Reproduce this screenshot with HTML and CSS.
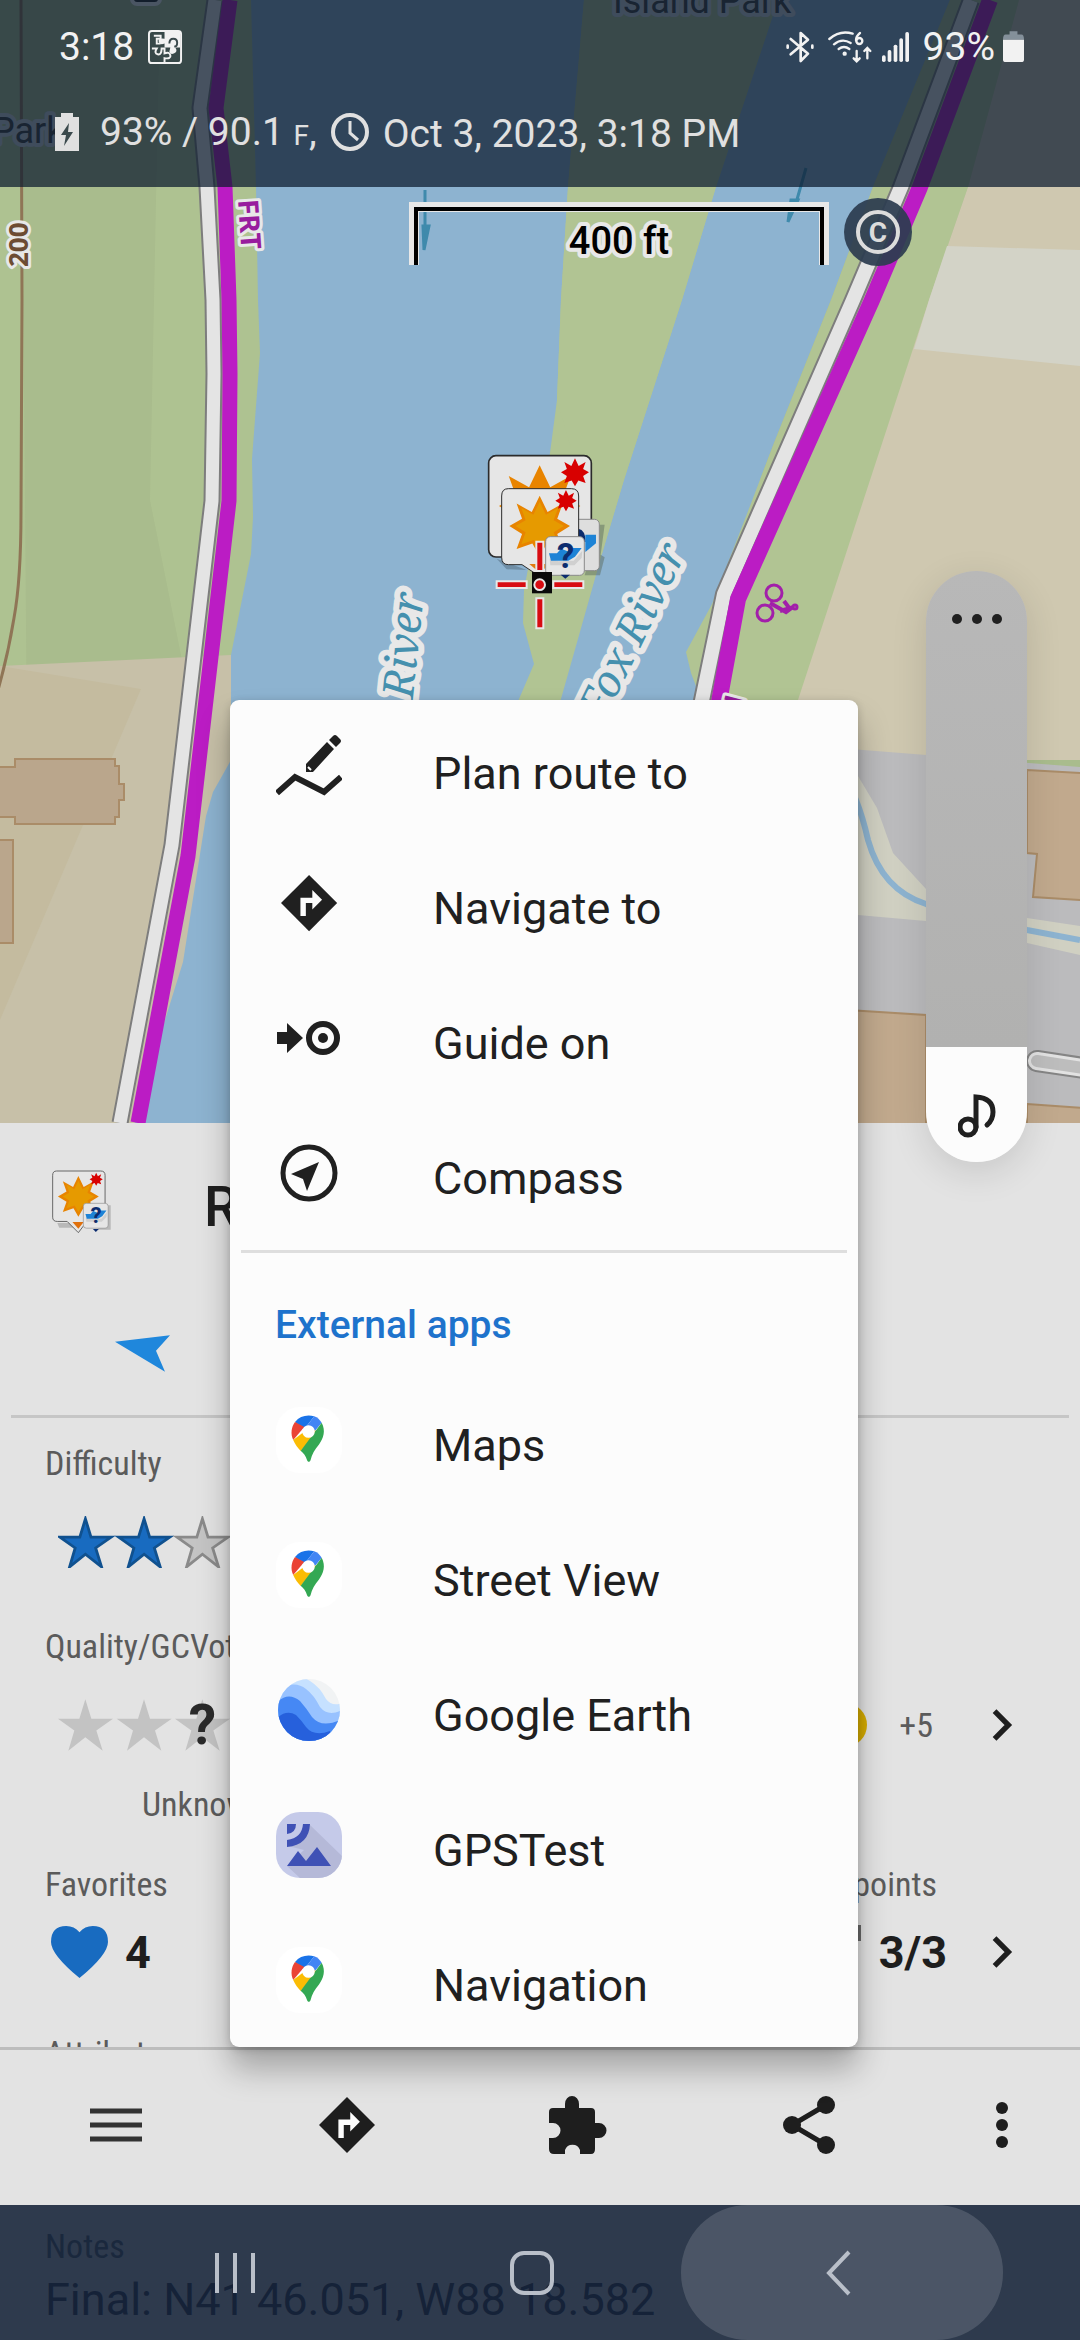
FILE: index.html
```html
<!DOCTYPE html>
<html lang="en">
<head>
<meta charset="utf-8">
<meta name="viewport" content="width=device-width, initial-scale=1">
<title>Map</title>
<link rel="stylesheet" href="styles.css">
</head>
<body>
<svg class="defs" aria-hidden="true">
  <defs>
    <g id="pin">
      <path fill="#1a73e8" d="M84 14C58 8 36 14 20 33l30 25z"/>
      <path fill="#ea4335" d="M20 33C8 49 4 72 14 93l37-43z"/>
      <path fill="#4285f4" d="M84 14 50 58l24 20 35-42C103 26 95 18 84 14z"/>
      <path fill="#fbbc04" d="M14 93c6 14 15 26 25 37l55-65-27-12z"/>
      <path fill="#34a853" d="M109 36c14 27 6 52-9 72-14 18-24 32-28 52-2 8-10 8-12 0-4-14-11-22-21-31z"/>
      <circle cx="65" cy="65" r="21" fill="#fff"/>
    </g>
    <path id="burst" d="M0-50 13-23 38-37 29-12 50 0 29 13 38 38 12 29 0 50-12 29-38 38-29 13-50 0-29-12-38-37-13-23z"/>
    <path id="star" d="M82 0l18 59h65l-50 35 19 61-52-41-51 41 18-61L0 59h64z"/>
    <g id="cache">
      <rect width="116" height="116" rx="14" fill="#e6e6e6" stroke="#8b8b8b" stroke-width="3"/>
      <path d="M12 66l26 8 46-2 26-30-2 22-22 22H14z" fill="#d0d0d0"/>
      <path d="M10 50h24l12-14 20 8 12-10h30L88 60 68 72H16z" fill="#1d83d6"/>
      <text x="60" y="94" text-anchor="middle" class="cache-mark">?</text>
    </g>
    <g id="turn">
      <path d="M26 0 52 26 26 52 0 26z"/>
      <path class="turn-arrow" d="M18 38V21h11v-7l9 9-9 9v-6h-6v12z"/>
    </g>
  </defs>
</svg>

<main class="screen">
  <section class="map" aria-label="Map">
    <svg class="map-art" viewBox="0 0 1080 1123" preserveAspectRatio="xMidYMin slice">
      <rect width="1080" height="1123" fill="#a9bc8d"/>
      <path d="M21 0H0v1123h30zM160 0h120v700H190L150 500z" fill="#b1c493" opacity=".7"/>
      <path d="M0 666 231 655V1123H0z" fill="#c7c0a8"/>
      <path d="M0 666 141 689 0 1020z" fill="#c4bb9f"/>
      <path d="M251 0 256 187 258 300 260 353 252 459 253 517 251 554 231 655 231 720 231 760 213 792 206 816 183 962 165 1020 135 1123H760V0z" fill="#8db3d0"/>
      <path d="M584 0 568 187 561 300 557 400 550 453 524 590 523 623 534 664 510 720 555 720 602 554 624 480 682 300 716 187 778 0z" fill="#b1c493"/>
      <path d="M580 0H950L873 187 831 300 774 443 750 506 712 604 686 652 691 673 705 710H560L602 554 624 480 682 300 716 187 778 0z" fill="#8db3d0"/>
      <path d="M584 0 568 187 561 300 557 400 602 554 624 480 682 300 716 187 778 0z" fill="#b1c493"/>
      <path d="M950 0 873 187 831 300 774 443 750 506 712 604 686 652 691 673 705 710H800L929 300 968 187 1019 0z" fill="#b1c493"/>
      <path d="M1019 0 968 187 929 300 798 700V760H1080V0z" fill="#cfc8b0"/>
      <path d="M947 246 1080 250V366L914 349 929 300z" fill="#d3d3c7"/>
      <path d="M800 745 1080 767V1123H800z" fill="#bbbbbd"/>
      <path d="M800 720 858 776 877 808 893 853 926 889 1027 918 1080 926V955L1027 943 926 921 858 915 800 912z" fill="#d0d0c2"/>
      <path d="M840 770Q858 795 868 840 882 890 926 904L1027 930 1080 940" fill="none" stroke="#8db3d0" stroke-width="6"/>
      <g fill="#c1a98d" stroke="#aa8c68" stroke-width="2">
        <path d="M1027 770 1082 773V900L1033 897 1037 854 1027 853z"/>
        <path d="M800 1007 926 1015V1130H800zM1027 1104 1082 1108V1130H1027z"/>
        <path d="M-2 767H15V759H115V766H119V784H124V800H119V817H115V824H15V817H-2zM-2 840H13V943H-2z" fill="#baa68c"/>
      </g>
      <path d="M1090 1069 1037 1061" stroke="#858585" stroke-width="22" stroke-linecap="round"/>
      <path d="M1090 1069 1037 1061" stroke="#e2e2e2" stroke-width="18" stroke-linecap="round"/>
      <path d="M1090 1069 1037 1061" stroke="#bdbdbd" stroke-width="12" stroke-linecap="round"/>
      <path d="M21 0 22 300 21 512Q21 580 14 618 8 655-2 690" fill="none" stroke="#8f7556" stroke-width="3"/>
      <g fill="none" stroke-linejoin="round">
        <path d="M215 0 200 108 207 187 213 300 214 374 212 501 172 845 120 1123" stroke="#7d7d7d" stroke-width="17"/>
        <path d="M215 0 200 108 207 187 213 300 214 374 212 501 172 845 120 1123" stroke="#e4e4e4" stroke-width="13"/>
        <path d="M230 0 216 108 225 187 229 300 230 374 229 501 188 856 138 1123" stroke="#bb1cc4" stroke-width="15"/>
        <path d="M971 0 901 187 853 300 724 594 699 715" stroke="#7d7d7d" stroke-width="18"/>
        <path d="M971 0 901 187 853 300 724 594 699 715" stroke="#e4e4e4" stroke-width="14"/>
        <path d="M990 0 920 187 872 300 738 599 712 740" stroke="#bb1cc4" stroke-width="16"/>
      </g>
      <g stroke="#3f8aac" stroke-width="3" fill="#3f8aac">
        <path d="M425 190V230M423 226h6l-5 24zM806 168 794 210M791 200h7l-10 22z"/>
      </g>
      <text class="map-label" x="-8" y="143">Park</text>
      <text class="map-label" x="613" y="13">Island Park</text>
      <rect x="132" y="-20" width="28" height="24" rx="5" fill="#222" stroke="#eee" stroke-width="4"/>
      <text class="map-ref" transform="translate(238 200) rotate(86)">FRT</text>
      <text class="map-ref" transform="translate(726 693) rotate(105)">FRT</text>
      <text class="map-height" transform="translate(28 267) rotate(-90)">200</text>
      <text class="map-river" transform="translate(404 782) rotate(-84)">Fox River</text>
      <text class="map-river" transform="translate(604 722) rotate(-64)">Fox River</text>
      <g fill="none" stroke="#a21faa" stroke-width="3">
        <circle cx="774" cy="593" r="8"/><circle cx="765" cy="613" r="8"/>
        <path d="M770 603 786 612 790 609 784 601M780 611 794 607" stroke-width="4"/>
        <circle cx="795" cy="607" r="2"/>
      </g>
      <path d="M414 265V207H824V265" fill="none" stroke="#e8e8e8" stroke-width="10"/>
      <path d="M416 265V209H822V265" fill="none" stroke="#000" stroke-width="4"/>
      <text class="map-scale" x="619" y="254" text-anchor="middle">400 ft</text>
      <circle cx="878" cy="232" r="34" fill="#2c3c50" opacity=".93"/>
      <circle cx="878" cy="232" r="20" fill="none" stroke="#dcdcdc" stroke-width="4"/>
      <text class="map-copy" x="878" y="242" text-anchor="middle">C</text>

      <g transform="translate(440 430) scale(.3333)">
        <path d="M170 386 260 420 200 418z" fill="#6f8ea6"/>
        <rect x="146" y="77" width="308" height="304" rx="22" fill="#e6e6e6" stroke="#2b2b2b" stroke-width="5"/>
        <use href="#burst" transform="translate(299 228) scale(2.44)" fill="#e88400"/>
        <use href="#burst" transform="translate(405 127) scale(.84)" fill="#d80000"/>
        <path d="M478 284h16l-12 90 12 8-14 54h-46z" fill="#5e6e60" opacity=".5"/>
        <rect x="362" y="268" width="116" height="154" rx="14" fill="#dedede" stroke="#8b8b8b" stroke-width="3"/>
        <path d="M415 296q22 4 22 40h-22z" fill="#0c2c6e"/><path d="M436 314h32v26l-32 26z" fill="#1d83d6"/>
        <path d="M205 176H394Q416 176 416 198V382Q416 404 394 404H350L300 440 246 404H205Q185 404 185 382V198Q185 176 205 176z" fill="#e6e6e6" stroke="#2b2b2b" stroke-width="3"/>
        <use href="#burst" transform="translate(299 288) scale(1.82)" fill="#e88400"/>
        <use href="#burst" transform="translate(299 288) scale(1.45)" fill="#e69a00"/>
        <use href="#burst" transform="translate(378 212) scale(.64)" fill="#d80000"/>
        <path d="M268 402h62l-31 26z" fill="#e07a10"/>
        <use href="#cache" transform="translate(317 320)"/>
        <path d="M362 434h28l-14 12z" fill="#0c2c6e"/>
        <path d="M276 426h60v64h-60z" fill="#0a0a0a"/>
        <g fill="#d80c12" stroke="#e8e8e8" stroke-width="6">
          <path d="M289 335h21v88h-21zM289 505h21v90h-21zM170 454h90v20h-90zM340 454h90v20h-90z"/>
          <circle cx="299" cy="464" r="16"/>
        </g>
      </g>
    </svg>

    <header class="topbar">
      <div class="status">
        <span>3:18</span>
        <svg class="notif" viewBox="0 0 36 36"><rect x="1" y="1" width="33" height="33" rx="3" fill="none" stroke="#f2f2f2" stroke-width="2"/><path d="M17 2h16v16h-5q3 4-1 6t-5-2l1-4h-6v-4q-5 2-6-2t6-3z" fill="#f2f2f2"/><path d="M6 6h7v3H9v5h4M4 19h5q-3 5 1 6t4-6h3v5q5-2 6 2t-6 3v4" fill="none" stroke="#f2f2f2" stroke-width="2"/><path d="M22 14q0-5 4-5t4 4-3 4" fill="none" stroke="#3b4a4d" stroke-width="2"/></svg>
        <svg class="bt" viewBox="0 0 84 96" fill="none" stroke="#f2f2f2" stroke-width="8" stroke-linecap="round" stroke-linejoin="round"><path d="M14 24 66 68 44 90V6L66 26 14 70M5 44v6M79 44v6"/></svg>
        <svg class="wifi" viewBox="0 0 132 96" fill="none" stroke="#f2f2f2" stroke-width="7" stroke-linecap="round"><path d="M4 24Q36-4 74 8M18 40Q42 20 68 36M32 54Q48 42 64 54"/><circle cx="50" cy="68" r="3"/><path d="M96 6Q84 16 84 28M86 60V90M77 82l9 9 9-9M118 82V52M109 60l9-9 9 9"/><circle cx="94" cy="30" r="9"/></svg>
        <svg class="signal" viewBox="0 0 84 90" fill="#f2f2f2"><rect y="70" width="11" height="20" rx="5"/><rect x="17" y="54" width="11" height="36" rx="5"/><rect x="35" y="38" width="11" height="52" rx="5"/><rect x="52" y="19" width="11" height="71" rx="5"/><rect x="70" width="11" height="90" rx="5"/></svg>
        <span>93%</span>
        <svg class="batt" viewBox="0 0 64 96"><path d="M20 0h24v10H20zM8 10h48q8 0 8 16H0Q0 10 8 10z" fill="#84909a"/><path d="M0 26H64V86Q64 94 56 94H8Q0 94 0 86z" fill="#f2f2f2"/></svg>
      </div>
      <div class="infoline">
        <svg class="charge" viewBox="0 0 24 38"><path d="M6 0h12v4h6v34H0V4h6z" fill="#e0e0e0"/><path d="M14 10 6 22h5l-2 11 9-14h-5z" fill="#3b4a4d"/></svg>
        <span>93% / 90.1 <small>F</small>,</span>
        <svg class="clock" viewBox="0 0 38 38" fill="none" stroke="#e0e0e0" stroke-width="4"><circle cx="19" cy="19" r="17"/><path d="M19 8v12l8 7" stroke-width="3"/></svg>
        <span>Oct 3, 2023, 3:18 PM</span>
      </div>
    </header>
  </section>

  <section class="sheet">
    <div class="sheet-title">
      <svg class="badge" viewBox="0 0 182 192"><path d="M16 160h40l22 14H22z" fill="#b9b9b9"/><path d="M14 2H148Q161 2 161 15V152H108L80 189 46 155H16Q2 155 2 142V15Q2 2 14 2z" fill="#e6e6e6" stroke="#666" stroke-width="3"/><use href="#burst" transform="translate(80 79) scale(1.24)" fill="#e88400"/><use href="#burst" transform="translate(80 79) scale(.95)" fill="#e69a00"/><use href="#burst" transform="translate(134 27) scale(.4)" fill="#d80000"/><path d="M62 157h34l-16 20z" fill="#e0700c"/><path d="M170 106h8v74h-40z" fill="#b9b9b9"/><use href="#cache" transform="translate(95 100) scale(.65)"/><path d="M124 178h18l-9 9z" fill="#0c2c6e"/></svg>
      <h1>R</h1>
    </div>
    <div class="bearing"><svg viewBox="0 0 165 110"><path d="M0 20 165 0 123 47 150 110z" fill="#1f87dc"/></svg></div>
    <hr>
    <div class="facts">
      <div class="label">Difficulty</div>
      <div class="value">
        <svg class="stars" viewBox="0 0 516 155">
          <g class="star-edge" fill="#186bc0" stroke="#10518f"><use href="#star" transform="translate(6 8) scale(.93)"/><use href="#star" transform="translate(182 8) scale(.93)"/></g>
          <g class="star-edge" fill="#c4c4c4" stroke="#8a8a8a"><use href="#star" transform="translate(357 8) scale(.93)"/></g>
        </svg>
      </div>
      <div class="label second">Quality/GCVote</div>
      <div class="value">
        <div class="rating">
          <svg class="stars" viewBox="0 0 516 155" fill="#c3c3c3"><use href="#star"/><use href="#star" x="176"/><use href="#star" x="351"/></svg>
          <b>?</b>
        </div>
        <a class="more" href="#attributes">
          <i class="dot"></i>
          <span>+5</span>
          <svg class="chev" viewBox="0 0 20 32"><path d="M3 3 16 16 3 29"/></svg>
        </a>
      </div>
      <div class="label unknown">Unknown</div>
      <div class="label pair"><span>Favorites</span><span class="wp-label">Waypoints</span></div>
      <div class="value low">
        <svg class="heart" viewBox="0 0 172 157"><path d="M86 157Q0 86 0 48 0 0 46 0 70 0 86 19 102 0 126 0 172 0 172 48 172 86 86 157z" fill="#186bc0"/></svg>
        <strong>4</strong>
        <a class="more" href="#waypoints">
          <svg class="flag" viewBox="0 0 30 16"><path d="M0 0h30v16h-4V6H0z"/></svg>
          <strong>3/3</strong>
          <svg class="chev" viewBox="0 0 20 32"><path d="M3 3 16 16 3 29"/></svg>
        </a>
      </div>
      <div class="label cut">Attributes</div>
    </div>
  </section>

  <nav class="toolbar" aria-label="Point actions">
    <button aria-label="Menu"><svg class="i-menu" viewBox="0 0 52 34"><path d="M0 3h52M0 17h52M0 31h52" stroke="#333" stroke-width="5"/></svg></button>
    <button aria-label="Navigate"><svg class="i-turn" viewBox="0 0 52 52"><use href="#turn"/></svg></button>
    <button aria-label="Add-ons"><svg class="i-puzzle" viewBox="0 0 58 58"><path d="M4 12h12V8a7 8 0 0 1 14 0v4h12q4 0 4 4v11h4a7 7 0 0 1 0 15h-4v11q0 5-4 5H31V54a8 8 0 0 0-15 0v4H5q-5 0-5-5V42h4a7 7 0 0 0 0-15H0V16q0-4 4-4z"/></svg></button>
    <button aria-label="Share"><svg class="i-share" viewBox="0 0 52 58"><path d="M43 9 9 29 43 49" fill="none" stroke="#1e1e1e" stroke-width="5"/><circle cx="43" cy="9" r="9"/><circle cx="9" cy="29" r="9"/><circle cx="43" cy="49" r="9"/></svg></button>
    <button class="last" aria-label="More"><svg class="i-dots" viewBox="0 0 12 46"><circle cx="6" cy="6" r="6"/><circle cx="6" cy="23" r="6"/><circle cx="6" cy="40" r="6"/></svg></button>
  </nav>

  <section class="bottom">
    <div class="notes">
      <div class="notes-label">Notes</div>
      <div class="notes-text">Final: N41 46.051, W88 18.582</div>
    </div>
    <nav class="system" aria-label="System">
      <button aria-label="Recents"><svg class="s-rec" viewBox="0 0 40 44"><path d="M2 2v40M20 2v40M38 2v40"/></svg></button>
      <button aria-label="Home"><svg class="s-home" viewBox="0 0 44 44"><rect x="2" y="2" width="40" height="40" rx="12"/></svg></button>
      <button class="pressed" aria-label="Back"><svg class="s-back" viewBox="0 0 26 46"><path d="M23 2 3 23 23 44"/></svg></button>
    </nav>
  </section>

  <div class="volume">
    <input type="range" min="0" max="15" value="3" aria-label="Media volume">
    <button aria-label="Sound settings"><svg viewBox="0 0 52 12"><circle cx="6" cy="6" r="5"/><circle cx="26" cy="6" r="5"/><circle cx="46" cy="6" r="5"/></svg></button>
    <svg class="note" viewBox="0 0 38 44"><ellipse cx="10" cy="33" rx="8" ry="8"/><path d="M18 33V3Q35 4 35 18 35 26 29 31"/></svg>
  </div>

  <div class="menu" role="menu">
    <button role="menuitem"><svg viewBox="0 0 66 66"><path d="M1 58 19 42 48 57 65 42" fill="none" stroke="#202020" stroke-width="6"/><path d="M30 37V29L51 7 58 14 37 37z M53 5l4-4q2-2 4 0l3 3q2 2 0 4l-4 4z"/><path d="M32 32l3 3" stroke="#fcfcfc" stroke-width="2"/></svg><span>Plan route to</span></button>
    <button role="menuitem"><svg viewBox="0 0 66 66"><use href="#turn" transform="translate(5 5) scale(1.08)"/></svg><span>Navigate to</span></button>
    <button role="menuitem"><svg viewBox="0 0 66 66"><path d="M1 27H11V18L27 33 11 48V39H1z"/><circle cx="47" cy="33" r="14" fill="none" stroke="#202020" stroke-width="6"/><circle cx="47" cy="33" r="5"/></svg><span>Guide on</span></button>
    <button role="menuitem"><svg viewBox="0 0 66 66"><circle cx="33" cy="33" r="26" fill="none" stroke="#202020" stroke-width="5"/><path d="M43 22 31 51 27 39 15 34z"/></svg><span>Compass</span></button>
    <hr>
    <h2>External apps</h2>
    <button role="menuitem"><svg viewBox="0 0 66 66"><rect width="66" height="66" rx="24" fill="#fff"/><use href="#pin" transform="translate(13 5) scale(.3)"/></svg><span>Maps</span></button>
    <button role="menuitem"><svg viewBox="0 0 66 66"><rect width="66" height="66" rx="24" fill="#fff"/><use href="#pin" transform="translate(13 5) scale(.3)"/></svg><span>Street View</span></button>
    <button role="menuitem"><svg viewBox="0 0 66 66">
      <clipPath id="globe"><circle cx="33" cy="33" r="31"/></clipPath>
      <g clip-path="url(#globe)"><rect width="66" height="66" fill="#f1f3f4"/>
      <path d="M0 12Q20-6 34 4 44 10 50 22 56 30 66 26V66H0z" fill="#c6e1ff"/>
      <path d="M0 14Q18 2 30 12 38 18 44 30 52 40 66 33V66H0z" fill="#98c2ff"/>
      <path d="M0 26Q12 14 24 24 31 32 36 40 46 52 66 42V66H0z" fill="#4688f4"/>
      <path d="M0 42Q10 32 20 38 26 44 30 50 38 60 54 54V66H0z" fill="#2660dc"/></g></svg><span>Google Earth</span></button>
    <button role="menuitem"><svg viewBox="0 0 66 66"><clipPath id="tile"><rect width="66" height="66" rx="24"/></clipPath><g clip-path="url(#tile)"><rect width="66" height="66" fill="#c5cae9"/><path d="M33 12 66 44V66H24L11 54 28 38 12 34z" fill="#b5b9d8"/></g><path fill="#3f51b5" d="M11 12H20Q20 21 11 22zM11 28Q26 26 27 12H34Q33 33 11 35zM11 54 22 39 30 49 41 35 55 54z"/></svg><span>GPSTest</span></button>
    <button role="menuitem"><svg viewBox="0 0 66 66"><rect width="66" height="66" rx="24" fill="#fff"/><use href="#pin" transform="translate(13 5) scale(.3)"/></svg><span>Navigation</span></button>
  </div>
</main>
</body>
</html>
```
FILE: styles.css
```css
* { box-sizing: border-box; }

body {
  margin: 0;
  font-family: Roboto, "Liberation Sans", sans-serif;
  color: #202020;
  background: #e3e3e3;
}

button {
  border: 0;
  padding: 0;
  background: none;
  font: inherit;
  color: inherit;
}

svg { display: block; flex: none; }
.defs { position: absolute; width: 0; height: 0; }

.screen {
  position: relative;
  display: flex;
  flex-direction: column;
  min-height: 100vh;
  overflow: hidden;
}

/* map */
.map { position: relative; flex: 1; min-height: 600px; }
.map-art { position: absolute; inset: 0; width: 100%; height: 100%; }
.map-label, .map-ref, .map-height, .map-river, .map-scale {
  paint-order: stroke;
  stroke: #e8e8e8;
  stroke-width: 8px;
  stroke-linejoin: round;
}
.map-label { font-size: 36px; fill: #3c3c3c; stroke: #c8cdd6; }
.map-ref { font: bold 28px "Noto Sans", sans-serif; fill: #981c9e; stroke-width: 6px; }
.map-height { font: bold 26px "Noto Sans", sans-serif; fill: #6d4c33; stroke-width: 6px; }
.map-river { font: italic 43px "Noto Serif", "Liberation Serif", serif; fill: #4590ae; stroke-width: 12px; }
.map-scale { font-size: 38px; font-weight: 500; fill: #000; }
.map-copy { font-size: 28px; font-weight: 700; fill: #dcdcdc; }
.cache-mark { font-size: 104px; font-weight: 700; fill: #0c2c6e; }
.turn-arrow { fill: #fcfcfc; }

/* top bars */
.topbar {
  position: relative;
  height: 187px;
  padding: 21px 56px 0 59px;
  background: rgba(13, 27, 47, .73);
  color: #f2f2f2;
  font-size: 39px;
  line-height: 52px;
}
.status { display: flex; align-items: center; }
.notif { width: 35px; height: 35px; margin-left: 14px; }
.bt { width: 28px; height: 32px; margin-left: auto; }
.wifi { width: 44px; height: 32px; margin: 0 10px 0 14px; }
.signal { width: 28px; height: 30px; margin-right: 13px; }
.batt { width: 21px; height: 32px; margin-left: 8px; }
.infoline {
  display: flex;
  align-items: center;
  margin: 33px 0 0 -4px;
  color: #e0e0e0;
}
.infoline small { font-size: 28px; }
.charge { width: 24px; height: 38px; margin: 0 21px 4px 0; }
.clock { width: 38px; height: 38px; margin: 0 14px 4px; }

/* details */
.sheet { background: #e3e3e3; }
.sheet-title {
  display: flex;
  align-items: center;
  height: 168px;
  padding-left: 52px;
}
.badge { width: 60px; height: 64px; margin: 0 92px 10px 0; }
h1 { margin: 0; font-size: 55px; font-weight: 500; }
.bearing { display: flex; align-items: center; height: 124px; padding-left: 115px; }
.bearing svg { width: 55px; height: 37px; }
hr { height: 3px; margin: 0 11px; border: 0; background: #c6c6c6; }
.facts {
  padding: 23px 67px 0 45px;
  font-family: "Roboto Condensed", Roboto, "Liberation Sans", sans-serif;
}
.label { color: #5b5b5b; font-size: 34px; line-height: 44px; height: 44px; }
.second { margin-top: 25px; }
.unknown { padding-left: 97px; }
.pair { display: flex; justify-content: space-between; margin-top: 36px; }
.wp-label { margin-right: 76px; }
.cut { height: 16px; margin-top: 33px; overflow: hidden; }
.value { display: flex; align-items: center; height: 114px; padding-left: 13px; }
.low { height: 92px; padding-left: 6px; }
.stars { width: 172px; height: 52px; }
.star-edge { stroke-width: 9px; }
.rating { display: grid; align-items: center; }
.rating > * { grid-area: 1 / 1; }
.rating b { justify-self: end; margin-right: 14px; font: 700 55px Roboto, sans-serif; color: #2a2a2a; }
.heart { width: 57px; height: 52px; margin-right: 17px; }
strong { font: 700 45px Roboto, sans-serif; color: #1e1e1e; }
.more {
  display: flex;
  align-items: center;
  margin-left: auto;
  color: #5b5b5b;
  font-size: 34px;
  text-decoration: none;
}
.dot { width: 44px; height: 44px; border-radius: 50%; background: #d6ac00; margin-right: 32px; }
.flag { width: 30px; height: 16px; margin: 0 18px 38px 0; fill: #6a6a6a; }
.chev { width: 22px; height: 34px; fill: none; stroke: #1e1e1e; stroke-width: 5px; }
.more span { margin-right: 58px; }
.more strong { margin-right: 44px; }

/* toolbar */
.toolbar {
  display: flex;
  height: 158px;
  padding-bottom: 5px;
  border-top: 3px solid #bdbdbd;
  background: #e3e3e3;
}
.toolbar button { flex: 1; display: grid; place-items: center; fill: #1e1e1e; }
.toolbar .last { flex: 0 0 156px; }
.toolbar .turn-arrow { fill: #e3e3e3; }
.i-menu { width: 52px; height: 34px; }
.i-turn { width: 56px; height: 56px; }
.i-puzzle { width: 58px; height: 58px; }
.i-share { width: 52px; height: 58px; }
.i-dots { width: 12px; height: 46px; }

/* system navigation over the notes */
.bottom { display: grid; height: 135px; background: #2e3a4d; }
.bottom > * { grid-area: 1 / 1; }
.notes { padding: 20px 45px 0; color: #152238; }
.notes-label { font: 34px/42px "Roboto Condensed", Roboto, sans-serif; color: #1a283d; }
.notes-text { font-size: 45px; line-height: 66px; }
.system {
  display: grid;
  grid-template-columns: 1fr 1fr 322px;
  padding: 0 77px 0 86px;
  fill: none;
  stroke: #b9bfc9;
  stroke-width: 4px;
}
.system button { display: grid; place-items: center; }
.pressed { border-radius: 67px; }
.system .pressed { background: rgba(255, 255, 255, .14); padding-right: 6px; }
.s-rec { width: 40px; height: 44px; }
.s-home { width: 44px; height: 44px; }
.s-back { width: 26px; height: 46px; }

/* volume panel */
.volume {
  position: absolute;
  top: 571px;
  right: 53px;
  width: 101px;
  height: 591px;
  border-radius: 50px;
  overflow: hidden;
  display: grid;
  justify-items: center;
  box-shadow: 0 10px 36px rgba(0, 0, 0, .12);
}
.volume > * { grid-area: 1 / 1; }
.volume input {
  appearance: none;
  writing-mode: vertical-lr;
  direction: rtl;
  width: 100%;
  height: 100%;
  margin: 0;
  background: linear-gradient(#b8b8b8 0, #b1b1b0 476px, #fcfcfc 476px);
}
.volume input::-webkit-slider-thumb { appearance: none; width: 0; height: 0; }
.volume button { position: relative; align-self: start; padding: 42px 24px; }
.volume button svg { width: 52px; height: 12px; fill: #202020; }
.note { position: relative; align-self: end; width: 38px; height: 44px; margin-bottom: 24px; fill: none; stroke: #202020; stroke-width: 5px; stroke-linecap: round; }

/* popup menu */
.menu {
  position: absolute;
  top: 700px;
  left: 230px;
  width: 628px;
  max-height: 1347px;
  padding-top: 6px;
  overflow: hidden;
  border-radius: 9px;
  background: #fcfcfc;
  box-shadow: 0 22px 32px rgba(0, 0, 0, .28), 0 2px 8px rgba(0, 0, 0, .18);
}
.menu button {
  display: flex;
  align-items: center;
  width: 100%;
  height: 135px;
  padding-left: 46px;
  font-size: 45px;
}
.menu button svg { width: 66px; height: 66px; margin: 0 91px 12px 0; fill: #202020; }
.menu hr { margin: 4px 11px 0; background: #dedede; }
.menu h2 {
  margin: 0;
  padding: 50px 45px 31px;
  font-size: 39px;
  font-weight: 500;
  line-height: 44px;
  color: #1e73cc;
}
```
